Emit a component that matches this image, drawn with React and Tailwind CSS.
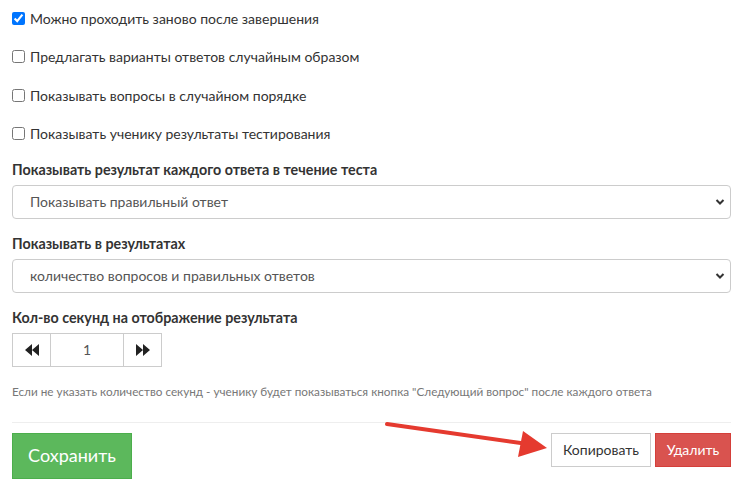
import { useState } from 'react';

const font = { fontFamily: 'Lato, "Open Sans", Arial, sans-serif' };

function Check({ label, checked }) {
  const [on, setOn] = useState(checked);
  return (
    <label className="flex items-center h-[24px] text-[14px] text-[#333] cursor-pointer">
      <input
        type="checkbox"
        checked={on}
        onChange={() => setOn(!on)}
        className="w-[13px] h-[13px] m-0 mr-[5px] accent-[#0075ff]"
      />
      <span>{label}</span>
    </label>
  );
}

function Select({ value, options }) {
  return (
    <div className="relative">
      <select
        defaultValue={value}
        className="appearance-none w-full h-[34px] border border-[#ccc] rounded-[4px] bg-white pl-[17px] pr-8 text-[14px] text-[#555] outline-none"
        style={font}
      >
        {options.map((o) => (
          <option key={o}>{o}</option>
        ))}
      </select>
      <svg className="absolute right-[6px] top-[13px] w-[10px] h-[8px] pointer-events-none" viewBox="0 0 10 8">
        <path d="M1.5 2 L5 5.5 L8.5 2" fill="none" stroke="#333" strokeWidth="2" />
      </svg>
    </div>
  );
}

export default function App() {
  const [secs, setSecs] = useState(1);

  return (
    <div className="relative w-[747px] h-[489px] bg-white overflow-hidden" style={font}>
      <div className="pl-[12px] pr-[16px] pt-[6px]">
        <div className="flex flex-col gap-[14.5px]">
          <Check label="Можно проходить заново после завершения" checked />
          <Check label="Предлагать варианты ответов случайным образом" />
          <Check label="Показывать вопросы в случайном порядке" />
          <Check label="Показывать ученику результаты тестирования" />
        </div>

        <div className="mt-[14px] text-[14.3px] font-bold text-[#333] h-[20px] leading-[20px]">
          Показывать результат каждого ответа в течение теста
        </div>
        <div className="mt-[5px]">
          <Select
            value="Показывать правильный ответ"
            options={['Показывать правильный ответ', 'Не показывать']}
          />
        </div>

        <div className="mt-[15px] text-[14.3px] font-bold text-[#333] h-[20px] leading-[20px]">
          Показывать в результатах
        </div>
        <div className="mt-[5px]">
          <Select
            value="количество вопросов и правильных ответов"
            options={['количество вопросов и правильных ответов', 'только оценку']}
          />
        </div>

        <div className="mt-[15px] text-[14.3px] font-bold text-[#333] h-[20px] leading-[20px]">
          Кол-во секунд на отображение результата
        </div>
        <div className="mt-[5px] flex w-[150px] h-[34px]">
          <button
            onClick={() => setSecs(Math.max(0, secs - 1))}
            className="w-[39px] h-full border border-[#ccc] bg-white flex items-center justify-center"
          >
            <svg viewBox="0 0 14 12" className="w-[14px] h-[12px]">
              <path d="M7 0 L0 6 L7 12 Z M14 0 L7 6 L14 12 Z" fill="#222" />
            </svg>
          </button>
          <input
            value={secs}
            onChange={(e) => setSecs(e.target.value)}
            className="w-[72px] h-full border-y border-[#ccc] text-center text-[14px] text-[#555] outline-none"
            style={font}
          />
          <button
            onClick={() => setSecs(Number(secs) + 1)}
            className="w-[39px] h-full border border-[#ccc] bg-white flex items-center justify-center"
          >
            <svg viewBox="0 0 14 12" className="w-[14px] h-[12px]">
              <path d="M0 0 L7 6 L0 12 Z M7 0 L14 6 L7 12 Z" fill="#222" />
            </svg>
          </button>
        </div>

        <p className="mt-[17px] text-[11.75px] text-[#777] leading-[15px] whitespace-nowrap">
          Если не указать количество секунд - ученику будет показываться кнопка "Следующий вопрос" после каждого ответа
        </p>

        <hr className="mt-[23px] border-t border-[#eee]" />

        <div className="mt-[10px] flex items-start">
          <button className="w-[120px] h-[46px] bg-[#5cb85c] border border-[#4cae4c] text-white text-[18px]">
            Сохранить
          </button>
          <div className="ml-auto flex gap-[4px]">
            <button className="w-[100px] h-[34px] bg-white border border-[#ccc] text-[#333] text-[14px]">
              Копировать
            </button>
            <button className="w-[76px] h-[34px] bg-[#d9534f] border border-[#d43f3a] text-white text-[14px]">
              Удалить
            </button>
          </div>
        </div>
      </div>

      <svg className="absolute left-0 top-0 w-[747px] h-[489px] pointer-events-none" viewBox="0 0 747 489">
        <line x1="387" y1="424" x2="528" y2="444" stroke="#e53a2f" strokeWidth="4" strokeLinecap="round" />
        <polygon points="523,431 547,448 518,457" fill="#e53a2f" />
      </svg>
    </div>
  );
}
